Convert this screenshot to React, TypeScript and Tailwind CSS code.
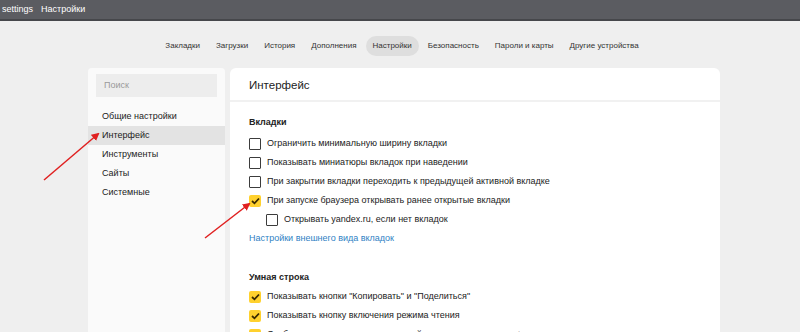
const TABS = [
  "Закладки",
  "Загрузки",
  "История",
  "Дополнения",
  "Настройки",
  "Безопасность",
  "Пароли и карты",
  "Другие устройства",
];

const MENU = ["Общие настройки", "Интерфейс", "Инструменты", "Сайты", "Системные"];

function Box({ checked }: { checked?: boolean }) {
  if (checked) {
    return (
      <span className="flex h-[12px] w-[12px] shrink-0 items-center justify-center rounded-[2px] bg-[#ffd12e]">
        <svg width="9" height="8" viewBox="0 0 9 8">
          <path d="M1 4 L3.5 6.3 L8 1.5" fill="none" stroke="#3a2a00" strokeWidth="1.8" />
        </svg>
      </span>
    );
  }
  return <span className="h-[12px] w-[12px] shrink-0 rounded-[1px] border-[1.5px] border-[#3c3c3c] bg-white" />;
}

function Row({ label, checked, nested }: { label: string; checked?: boolean; nested?: boolean }) {
  return (
    <div className={`flex h-[19px] items-center gap-[6px] ${nested ? "pl-[17px]" : ""}`}>
      <Box checked={checked} />
      <span className="whitespace-nowrap text-[#222]">{label}</span>
    </div>
  );
}

export default function App() {
  return (
    <div
      className="relative flex h-[332px] w-[800px] flex-col overflow-hidden bg-[#efefef] text-[9px]"
      style={{ fontFamily: '"Liberation Sans", Arial, sans-serif' }}
    >
      <div className="flex h-[21px] shrink-0 items-center gap-[8px] border-b-2 border-[#46474b] bg-[#5b5c61] pl-[2px] text-[9px] text-white">
        <span>settings</span>
        <span>Настройки</span>
      </div>

      <nav className="flex h-[47px] shrink-0 items-center justify-center gap-[2px] pl-[4px] pt-[2px] text-[8px] text-[#333]">
        {TABS.map((t) => (
          <span
            key={t}
            className={`rounded-full px-[7px] py-[4px] ${t === "Настройки" ? "bg-[#dedede]" : ""}`}
          >
            {t}
          </span>
        ))}
      </nav>

      <div className="flex min-h-0 flex-1 gap-[5px] overflow-hidden pl-[88px]">
        <aside className="w-[137px] shrink-0 rounded-t-[4px] bg-[#fafafa] pt-[6px]">
          <div className="mx-[8px] h-[23px] bg-[#ededed] pl-[8px] leading-[23px] text-[#9a9a9a]">Поиск</div>
          <div className="mt-[10px]">
            {MENU.map((m) => (
              <div
                key={m}
                className={`h-[19px] pl-[14px] leading-[19px] text-[#222] ${m === "Интерфейс" ? "bg-[#e3e3e3]" : ""}`}
              >
                {m}
              </div>
            ))}
          </div>
        </aside>

        <main className="w-[490px] shrink-0 rounded-t-[6px] bg-white">
          <div className="h-[34px] border-b-2 border-[#f1f1f1] pl-[19px] pt-[9px] text-[11.5px] leading-[16px] text-[#222]">
            Интерфейс
          </div>
          <div className="pl-[19px] pt-[14px]">
            <div className="mb-[6px] font-semibold leading-[12px] text-[#222]">Вкладки</div>
            <Row label="Ограничить минимальную ширину вкладки" />
            <Row label="Показывать миниатюры вкладок при наведении" />
            <Row label="При закрытии вкладки переходить к предыдущей активной вкладке" />
            <Row label="При запуске браузера открывать ранее открытые вкладки" checked />
            <Row label="Открывать yandex.ru, если нет вкладок" nested />
            <div className="h-[19px] leading-[19px] text-[#2f7fc4]">Настройки внешнего вида вкладок</div>
            <div className="mt-[23px] mb-[4px] font-semibold leading-[12px] text-[#222]">Умная строка</div>
            <Row label={'Показывать кнопки "Копировать" и "Поделиться"'} checked />
            <Row label="Показывать кнопку включения режима чтения" checked />
            <Row label="Отображать адреса страниц в умной строке в виде «домен > заголовок»" checked />
          </div>
        </main>
      </div>

      <svg className="pointer-events-none absolute left-0 top-0" width="800" height="332">
        <defs>
          <marker id="ah" markerWidth="8" markerHeight="8" refX="6" refY="4" orient="auto" markerUnits="userSpaceOnUse">
            <path d="M0 0 L8 4 L0 8 z" fill="#e02020" />
          </marker>
        </defs>
        <line x1="44" y1="180" x2="98" y2="134" stroke="#e02020" strokeWidth="1.5" markerEnd="url(#ah)" />
        <line x1="205" y1="238" x2="249" y2="204" stroke="#e02020" strokeWidth="1.5" markerEnd="url(#ah)" />
      </svg>
    </div>
  );
}
